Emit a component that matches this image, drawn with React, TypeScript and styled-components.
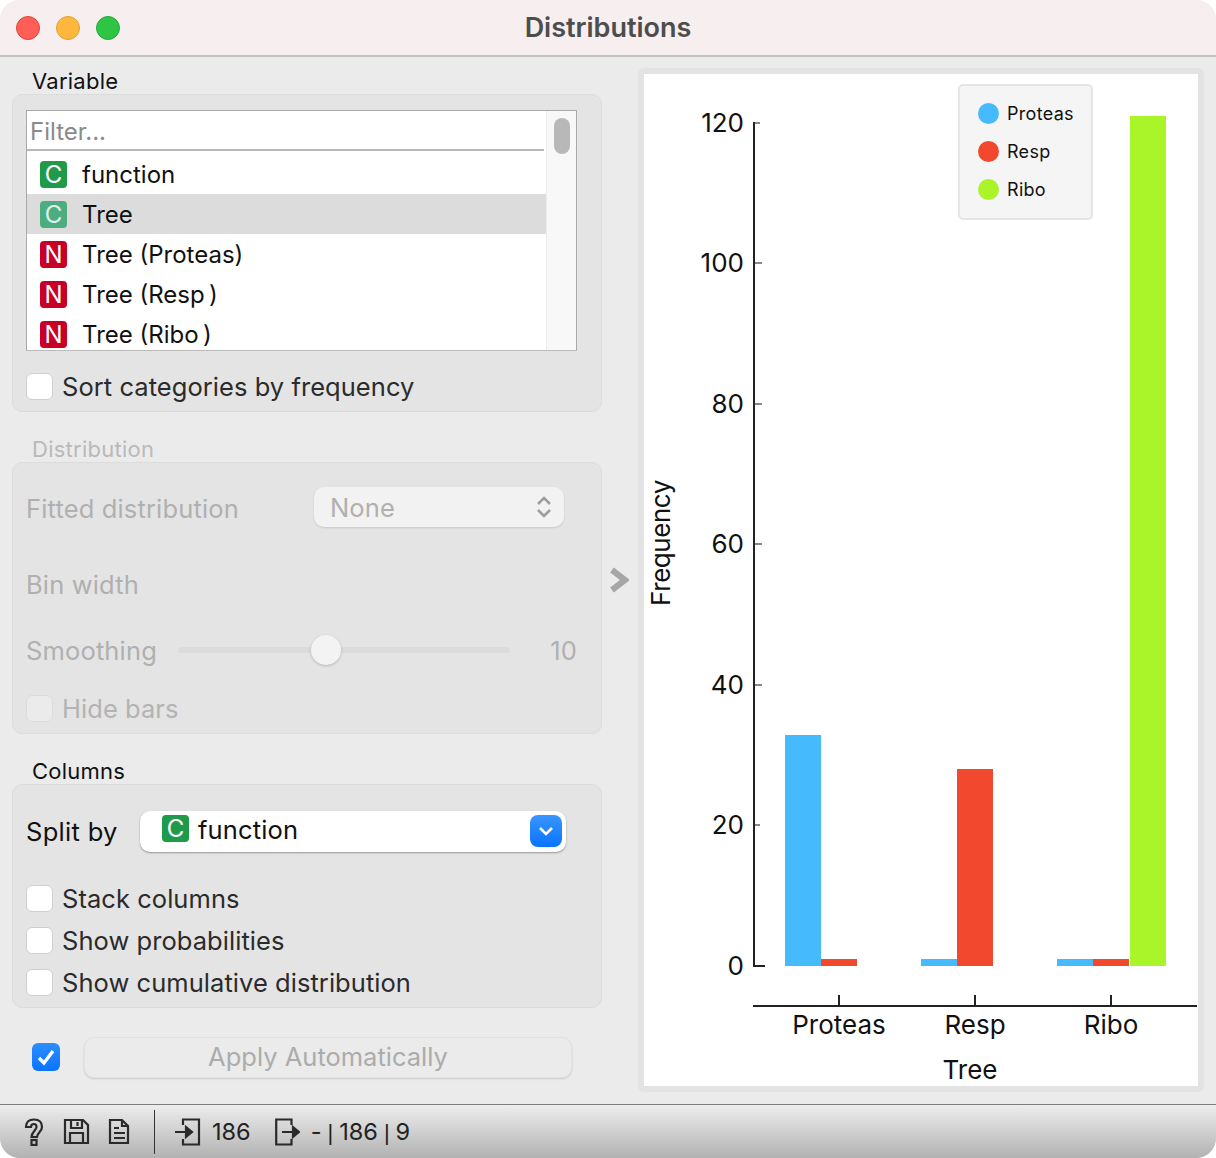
import React from 'react';
import styled, { createGlobalStyle } from 'styled-components';

const GlobalStyle = createGlobalStyle`
    html, body {
        margin: 0;
        padding: 0;
        background: #fff;
    }
    * {
        box-sizing: border-box;
    }
`;

const Window = styled.div`
    width: 1216px;
    height: 1158px;
    display: flex;
    flex-direction: column;
    overflow: hidden;
    border-radius: 20px;
    background: #ebebeb;
    font-family: Inter, "Liberation Sans", sans-serif;
    color: #111;
`;

const TitleBar = styled.div`
    position: relative;
    flex: none;
    height: 57px;
    display: flex;
    align-items: center;
    justify-content: center;
    background: #f6eeef;
    border-bottom: 2px solid #c2c0c0;
`;

const Lights = styled.div`
    position: absolute;
    left: 16px;
    top: 16px;
    display: flex;
    gap: 16px;
`;

const Light = styled.span<{ color: string; edge: string }>`
    width: 24px;
    height: 24px;
    border-radius: 50%;
    background: ${props => props.color};
    border: 1px solid ${props => props.edge};
`;

const Title = styled.div`
    font-size: 27px;
    font-weight: 600;
    color: #4d4d4d;
`;

const Main = styled.div`
    flex: none;
    height: 1047px;
    display: flex;
`;

const LeftColumn = styled.div`
    width: 590px;
    margin-left: 12px;
    padding-top: 11px;
    display: flex;
    flex-direction: column;
    gap: 24px;
`;

const Section = styled.section``;

const SectionLabel = styled.div<{ disabled?: boolean }>`
    height: 26px;
    margin-left: 20px;
    font-size: 22px;
    line-height: 26px;
    letter-spacing: 0.25px;
    color: ${props => props.disabled ? '#b9b9b9' : '#111'};
`;

const Box = styled.div<{ height: number }>`
    height: ${props => props.height}px;
    padding: 15px 24px 0 13px;
    background: #e4e4e4;
    border: 1px solid #dcdcdc;
    border-radius: 10px;
`;

const ListFrame = styled.div`
    display: flex;
    height: 241px;
    background: #fff;
    border: 1px solid #a9a9a9;
    border-bottom-color: #bbb;
    overflow: hidden;
`;

const ListBody = styled.div`
    flex: 1;
    min-width: 0;
`;

const FilterInput = styled.div`
    height: 40px;
    margin: 0 2px 3px 0;
    padding-left: 3px;
    border-bottom: 2px solid #b8b8b8;
    font-size: 24px;
    line-height: 42px;
    color: #8a8a8a;
`;

const ListItem = styled.div<{ selected?: boolean }>`
    display: flex;
    align-items: center;
    height: 40px;
    padding-left: 13px;
    background: ${props => props.selected ? '#dcdcdc' : '#fff'};
    font-size: 24px;
`;

const TypeBadge = styled.span<{ kind: 'C' | 'N'; faded?: boolean }>`
    flex: none;
    width: 27px;
    height: 27px;
    margin-right: 15px;
    display: flex;
    align-items: center;
    justify-content: center;
    border-radius: 4px;
    background: ${props => props.kind === 'N' ? '#c90026' : props.faded ? '#4cae80' : '#1f9a4b'};
    color: ${props => props.faded ? '#dff3ea' : '#fff'};
    font-size: 24px;
    font-weight: 400;
`;

const ScrollTrack = styled.div`
    flex: none;
    width: 30px;
    padding: 7px 0 0 7px;
    background: #f8f8f8;
    border-left: 1px solid #ececec;
`;

const ScrollThumb = styled.div`
    width: 16px;
    height: 36px;
    border-radius: 8px;
    background: #b8b8b8;
`;

const CheckRow = styled.label<{ disabled?: boolean; top: number }>`
    display: flex;
    align-items: center;
    height: 28px;
    margin-top: ${props => props.top}px;
    font-size: 25.5px;
    letter-spacing: 0.05px;
    color: ${props => props.disabled ? '#b3b3b3' : '#2b2b2b'};
`;

const CheckBox = styled.span<{ disabled?: boolean }>`
    flex: none;
    width: 27px;
    height: 27px;
    margin-right: 9px;
    border-radius: 6px;
    background: ${props => props.disabled ? '#ebebeb' : '#fff'};
    border: 1px solid ${props => props.disabled ? '#dcdcdc' : '#cfcfcf'};
`;

const FormRow = styled.div<{ top: number }>`
    display: flex;
    align-items: center;
    height: 40px;
    margin-top: ${props => props.top}px;
    font-size: 25.5px;
    letter-spacing: 0.15px;
    color: #b0b0b0;
`;

const FormLabel = styled.div<{ width: number }>`
    flex: none;
    width: ${props => props.width}px;
`;

const FittedLabel = styled(FormLabel)`
    padding-top: 2px;
`;

const DisabledSelect = styled.div`
    flex: none;
    width: 250px;
    height: 40px;
    padding: 0 12px 0 16px;
    display: flex;
    align-items: center;
    justify-content: space-between;
    background: #f2f2f2;
    border-radius: 10px;
    box-shadow: 0 1px 2px rgba(0, 0, 0, 0.12);
`;

const SliderTrack = styled.div`
    position: relative;
    flex: none;
    width: 332px;
    height: 6px;
    margin-left: 1px;
    border-radius: 3px;
    background: #dbdbdb;
`;

const SliderThumb = styled.span`
    position: absolute;
    left: 133px;
    top: -12px;
    width: 30px;
    height: 30px;
    border-radius: 50%;
    background: #f3f3f3;
    box-shadow: 0 1px 3px rgba(0, 0, 0, 0.2);
`;

const SliderValue = styled.div`
    flex: 1;
    text-align: right;
`;

const SplitLabel = styled.div`
    flex: none;
    width: 114px;
    color: #111;
    letter-spacing: 0.3px;
`;

const Combo = styled.div`
    flex: none;
    width: 426px;
    height: 41px;
    padding: 0 4px 0 22px;
    display: flex;
    align-items: center;
    background: #fff;
    border-radius: 10px;
    box-shadow: 0 1px 2px rgba(0, 0, 0, 0.35);
    font-size: 25.5px;
    color: #111;
`;

const ComboBadge = styled(TypeBadge)`
    margin: -6px 9px 0 0;
`;

const ComboText = styled.span`
    flex: 1;
    padding-bottom: 3px;
`;

const ComboButton = styled.span`
    flex: none;
    width: 32px;
    height: 32px;
    display: flex;
    align-items: center;
    justify-content: center;
    border-radius: 8px;
    background: linear-gradient(#3a95ff, #0a74ff);
`;

const AutoRow = styled.div`
    display: flex;
    align-items: center;
    margin-top: 29px;
    padding-left: 20px;
`;

const AutoCheck = styled.span`
    flex: none;
    width: 28px;
    height: 28px;
    margin: -2px 24px 0 0;
    display: flex;
    align-items: center;
    justify-content: center;
    border-radius: 6px;
    background: linear-gradient(#2b8dff, #0a74ff);
`;

const ApplyButton = styled.div`
    flex: none;
    width: 488px;
    height: 41px;
    padding-bottom: 2px;
    display: flex;
    align-items: center;
    justify-content: center;
    background: #ebebeb;
    border: 1px solid #e2e2e2;
    border-radius: 10px;
    box-shadow: 0 1px 2px rgba(0, 0, 0, 0.15);
    font-size: 25.5px;
    color: #acacac;
`;

const Splitter = styled.div`
    flex: none;
    width: 36px;
    padding: 0 0 2px 7px;
    display: flex;
    align-items: center;
`;

const ChartPanel = styled.div`
    position: relative;
    flex: none;
    width: 566px;
    height: 1024px;
    margin-top: 11px;
    padding: 6px;
    background: #e3e3e3;
    border-radius: 6px;
`;

const ChartCanvas = styled.svg`
    display: block;
    width: 554px;
    height: 1012px;
    background: #fff;
`;

const AxisText = styled.text`
    font-family: Inter, "Liberation Sans", sans-serif;
    font-size: 26px;
    fill: #111;
`;

const AxisTitle = styled(AxisText)`
    letter-spacing: -0.45px;
`;

const Legend = styled.div`
    position: absolute;
    left: 320px;
    top: 16px;
    width: 135px;
    height: 136px;
    padding: 8px 0 0 18px;
    display: flex;
    flex-direction: column;
    background: #f5f5f5;
    border: 2px solid #e5e5e5;
    border-radius: 5px;
`;

const LegendRow = styled.div`
    display: flex;
    align-items: center;
    height: 38px;
    font-size: 18px;
    letter-spacing: 0.3px;
`;

const LegendDot = styled.span<{ color: string }>`
    flex: none;
    width: 21px;
    height: 21px;
    margin-right: 8px;
    border-radius: 50%;
    background: ${props => props.color};
`;

const StatusBar = styled.div`
    flex: 1;
    display: flex;
    align-items: center;
    padding-left: 24px;
    background: linear-gradient(#ededed, #b2b2b2);
    border-top: 1px solid #7c7c7c;
    font-size: 23.5px;
    color: #222;
`;

const StatusIcon = styled.svg<{ gap: number }>`
    flex: none;
    margin-right: ${props => props.gap}px;
    fill: none;
    stroke: #2a2a2a;
    stroke-width: 2.2;
`;

const StatusDivider = styled.span`
    flex: none;
    width: 1px;
    height: 44px;
    margin: 0 20px 0 24px;
    background: #333;
`;

const StatusCount = styled.span<{ gap: number }>`
    margin-right: ${props => props.gap}px;
`;

const Dash = styled.span`
    margin-left: -1px;
`;

const Pipe = styled.span`
    margin: 0 6px;
    font-family: "Liberation Sans", sans-serif;
    font-size: 22px;
`;

const BLUE = '#45bbfd';
const RED = '#f1482e';
const GREEN = '#aaf42a';

const yTicks = [
    { label: '120', y: 49, end: 116, color: '#888' },
    { label: '100', y: 189, end: 118, color: '#888' },
    { label: '80', y: 330, end: 118, color: '#888' },
    { label: '60', y: 470, end: 118, color: '#888' },
    { label: '40', y: 611, end: 118, color: '#888' },
    { label: '20', y: 751, end: 116, color: '#888' },
    { label: '0', y: 892, end: 121, color: '#222' },
];

const bars = [
    { x: 141, y: 661, w: 36, h: 231, color: BLUE },
    { x: 177, y: 885, w: 36, h: 7, color: RED },
    { x: 277, y: 885, w: 36, h: 7, color: BLUE },
    { x: 313, y: 695, w: 36, h: 197, color: RED },
    { x: 413, y: 885, w: 36, h: 7, color: BLUE },
    { x: 449, y: 885, w: 36, h: 7, color: RED },
    { x: 486, y: 42, w: 36, h: 850, color: GREEN },
];

const xTicks = [
    { label: 'Proteas', x: 195 },
    { label: 'Resp', x: 331 },
    { label: 'Ribo', x: 467 },
];

const Chart = () => (
    <ChartCanvas viewBox="0 0 554 1012">
        {bars.map(bar => (
            <rect key={`${bar.x}`} x={bar.x} y={bar.y} width={bar.w} height={bar.h} fill={bar.color} />
        ))}
        {yTicks.map(tick => (
            <g key={tick.label}>
                <line x1="110" y1={tick.y} x2={tick.end} y2={tick.y} stroke={tick.color} strokeWidth="2" />
                <AxisText x="100" y={tick.y + 9} textAnchor="end">{tick.label}</AxisText>
            </g>
        ))}
        <line x1="110" y1="48" x2="110" y2="893" stroke="#222" strokeWidth="2" />
        <line x1="109" y1="932" x2="553" y2="932" stroke="#222" strokeWidth="2" />
        {xTicks.map(tick => (
            <g key={tick.label}>
                <line x1={tick.x} y1="921" x2={tick.x} y2="932" stroke="#222" strokeWidth="2" />
                <AxisText x={tick.x} y="960" textAnchor="middle">{tick.label}</AxisText>
            </g>
        ))}
        <AxisText x="326" y="1005" textAnchor="middle">Tree</AxisText>
        <AxisTitle x="0" y="0" textAnchor="middle" transform="translate(26 469) rotate(-90)">Frequency</AxisTitle>
    </ChartCanvas>
);

const App = () => (
    <Window>
        <GlobalStyle />
        <TitleBar>
            <Lights>
                <Light color="#ff5f57" edge="#e0443e" />
                <Light color="#ffb63d" edge="#dea034" />
                <Light color="#2ec545" edge="#28a83b" />
            </Lights>
            <Title>Distributions</Title>
        </TitleBar>
        <Main>
            <LeftColumn>
                <Section>
                    <SectionLabel>Variable</SectionLabel>
                    <Box height={318}>
                        <ListFrame>
                            <ListBody>
                                <FilterInput>Filter...</FilterInput>
                                <ListItem><TypeBadge kind="C">C</TypeBadge>function</ListItem>
                                <ListItem selected><TypeBadge kind="C" faded>C</TypeBadge>Tree</ListItem>
                                <ListItem><TypeBadge kind="N">N</TypeBadge>Tree (Proteas)</ListItem>
                                <ListItem><TypeBadge kind="N">N</TypeBadge>{'Tree (Resp\u2009)'}</ListItem>
                                <ListItem><TypeBadge kind="N">N</TypeBadge>{'Tree (Ribo\u2009)'}</ListItem>
                            </ListBody>
                            <ScrollTrack><ScrollThumb /></ScrollTrack>
                        </ListFrame>
                        <CheckRow top={21}><CheckBox />Sort categories by frequency</CheckRow>
                    </Box>
                </Section>
                <Section>
                    <SectionLabel disabled>Distribution</SectionLabel>
                    <Box height={272}>
                        <FormRow top={9}>
                            <FittedLabel width={288}>Fitted distribution</FittedLabel>
                            <DisabledSelect>
                                None
                                <svg width="16" height="24" viewBox="0 0 16 24" fill="none" stroke="#9c9c9c" strokeWidth="2.5">
                                    <path d="M2 9l6-6 6 6M2 15l6 6 6-6" />
                                </svg>
                            </DisabledSelect>
                        </FormRow>
                        <FormRow top={37}><FormLabel width={287}>Bin width</FormLabel></FormRow>
                        <FormRow top={26}>
                            <FormLabel width={151}>Smoothing</FormLabel>
                            <SliderTrack><SliderThumb /></SliderTrack>
                            <SliderValue>10</SliderValue>
                        </FormRow>
                        <CheckRow disabled top={24}><CheckBox disabled />Hide bars</CheckRow>
                    </Box>
                </Section>
                <Section>
                    <SectionLabel>Columns</SectionLabel>
                    <Box height={224}>
                        <FormRow top={11}>
                            <SplitLabel>Split by</SplitLabel>
                            <Combo>
                                <ComboBadge kind="C">C</ComboBadge>
                                <ComboText>function</ComboText>
                                <ComboButton>
                                    <svg width="16" height="10" viewBox="0 0 16 10" fill="none" stroke="#fff" strokeWidth="2.6">
                                        <path d="M2 2l6 6 6-6" />
                                    </svg>
                                </ComboButton>
                            </Combo>
                        </FormRow>
                        <CheckRow top={33}><CheckBox />Stack columns</CheckRow>
                        <CheckRow top={14}><CheckBox />Show probabilities</CheckRow>
                        <CheckRow top={14}><CheckBox />Show cumulative distribution</CheckRow>
                    </Box>
                    <AutoRow>
                        <AutoCheck>
                            <svg width="20" height="18" viewBox="0 0 20 18" fill="none" stroke="#fff" strokeWidth="3.4">
                                <path d="M3 10l5 5 9-12" />
                            </svg>
                        </AutoCheck>
                        <ApplyButton>Apply Automatically</ApplyButton>
                    </AutoRow>
                </Section>
            </LeftColumn>
            <Splitter>
                <svg width="20" height="26" viewBox="0 0 20 26" fill="none" stroke="#a6a6a6" strokeWidth="6">
                    <path d="M3 3l13 10L3 23" />
                </svg>
            </Splitter>
            <ChartPanel>
                <Chart />
                <Legend>
                    <LegendRow><LegendDot color={BLUE} />Proteas</LegendRow>
                    <LegendRow><LegendDot color={RED} />Resp</LegendRow>
                    <LegendRow><LegendDot color={GREEN} />Ribo</LegendRow>
                </Legend>
            </ChartPanel>
        </Main>
        <StatusBar>
            <StatusIcon gap={19} width="20" height="28" viewBox="0 0 20 28">
                <path d="M2 9C2 4 5 1.5 10 1.5S18 4 18 9c0 5-5 6-5 10H7.5c0-5 5-7 5-10 0-2-1-3-2.5-3S7 6.500 7 9z" />
                <rect x="7.500" y="22" width="5" height="5" />
            </StatusIcon>
            <StatusIcon gap={18} width="27" height="27" viewBox="0 0 27 27">
                <path d="M2 2h18l5 5v18H2z" />
                <path d="M8 2v8h11V2M14.500 4v4M7 25V15h13v10" />
            </StatusIcon>
            <StatusIcon gap={0} width="22" height="27" viewBox="0 0 22 27">
                <path d="M2 2h12l6 6v17H2zM14 2v6h6M6 10h5M6 15h11M6 20h11" />
            </StatusIcon>
            <StatusDivider />
            <StatusIcon gap={11} width="26" height="28" viewBox="0 0 26 28">
                <path d="M8 7V1.500h16v25H8V21M0 14h15" />
                <path d="M11 9l6 5-6 5z" fill="#2a2a2a" />
            </StatusIcon>
            <StatusCount gap={24}>186</StatusCount>
            <StatusIcon gap={12} width="25" height="28" viewBox="0 0 25 28">
                <path d="M16.500 7V1.500H1.200v25h15.300V21M7 14h13" />
                <path d="M18 9l6 5-6 5z" fill="#2a2a2a" />
            </StatusIcon>
            <StatusCount gap={0}><Dash>-</Dash><Pipe>|</Pipe>186<Pipe>|</Pipe>9</StatusCount>
        </StatusBar>
    </Window>
);

export default App;
